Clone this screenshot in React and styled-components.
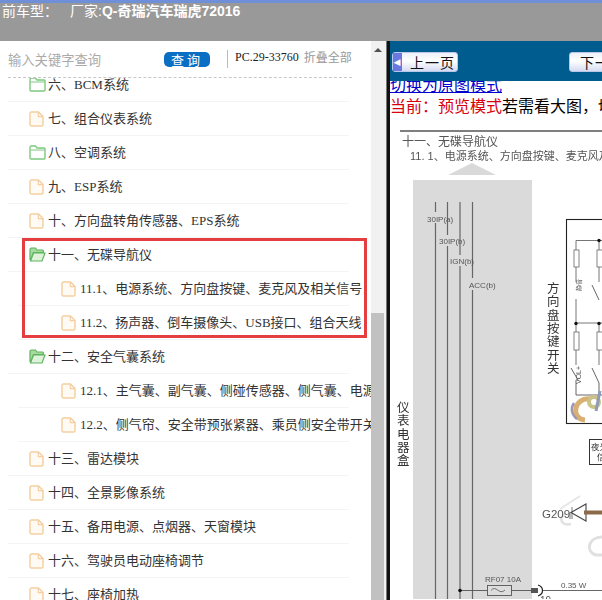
import React from 'react';
import styled, { createGlobalStyle } from 'styled-components';

const cjk = '"Liberation Serif", "Noto Sans CJK SC", serif';
const hei = '"Noto Sans CJK SC", "Liberation Sans", sans-serif';

const Global = createGlobalStyle`
  html, body { margin: 0; padding: 0; background: #fff; overflow: hidden; }
  * { box-sizing: border-box; }
`;

const Page = styled.div`
  width: 602px;
  height: 600px;
  display: flex;
  flex-direction: column;
  overflow: hidden;
`;

const TopBar = styled.div`
  height: 41px;
  flex: none;
  background: #999999;
  border-top: 3px solid #6f8fd8;
  padding: 0 0 0 2px;
  color: #fff;
  font: 14px/15px ${hei};
  white-space: nowrap;
  span { margin-left: 12px; font-family: "Liberation Sans", "Noto Sans CJK SC", sans-serif; }
  b { font-weight: 700; }
`;

const Main = styled.div`
  flex: 1;
  display: flex;
  min-height: 0;
`;

const LeftPane = styled.div`
  width: 371px;
  flex: none;
  display: flex;
  flex-direction: column;
  overflow: hidden;
  background: #fff;
`;

const SearchBar = styled.div`
  height: 37px;
  flex: none;
  margin: 0 19px 0 8px;
  border-bottom: 1px dashed #c8c8c8;
  display: flex;
  align-items: center;
  white-space: nowrap;
`;

const Keyword = styled.div`
  width: 156px;
  color: #aaa;
  font: 13.3px/16px ${hei};
  padding-top: 2px;
`;

const QueryButton = styled.div`
  width: 46px;
  height: 15px;
  border-radius: 5px;
  background: #0a6fc2;
  color: #fff;
  font: 13px/15px ${hei};
  letter-spacing: 3px;
  text-align: center;
`;

const Divider = styled.div`
  width: 1px;
  height: 18px;
  margin: 0 7px 0 17px;
  background: #bbb;
`;

const PartNo = styled.div`
  color: #222;
  font: 12px/14px "Liberation Serif", serif;
  margin-bottom: 4px;
`;

const Collapse = styled.div`
  color: #999;
  font: 12px/14px ${hei};
  margin: 0 0 4px 5px;
`;

const ListClip = styled.div`
  flex: 1;
  min-height: 0;
  overflow: hidden;
  position: relative;
`;

const List = styled.div`
  margin-top: -10px;
`;

const Row = styled.div`
  height: 34px;
  margin-left: ${p => (p.$sub ? '18px' : '8px')};
  width: ${p => (p.$sub ? '331px' : '341px')};
  padding-left: ${p => (p.$sub ? '43px' : '21px')};
  border-bottom: 1px solid #f4f4f4;
  display: flex;
  align-items: center;
  white-space: nowrap;
  color: #333;
  font: 13px/16px ${cjk};
`;

const IconBox = styled.span`
  width: 19px;
  height: 16px;
  flex: none;
  display: inline-flex;
  align-items: center;
`;

const Highlight = styled.div`
  position: absolute;
  left: 22px;
  top: 160px;
  width: 345px;
  height: 100px;
  border: 3px solid #e53e41;
`;

const Scrollbar = styled.div`
  width: 15px;
  flex: none;
  background: #f1f1f1;
  display: flex;
  flex-direction: column;
  justify-content: space-between;
`;

const ArrowUp = styled.div`
  width: 0;
  height: 0;
  margin: 7px 0 0 3px;
  border-left: 4px solid transparent;
  border-right: 4px solid transparent;
  border-bottom: 4px solid #505050;
`;

const Thumb = styled.div`
  width: 13px;
  height: 287px;
  background: #c1c1c1;
`;

const Splitter = styled.div`
  width: 4px;
  flex: none;
  background: #111;
  border-left: 1px solid #777;
`;

const RightPane = styled.div`
  flex: 1;
  min-width: 0;
  overflow: hidden;
  display: flex;
  flex-direction: column;
  background: #fff;
`;

const NavBar = styled.div`
  height: 40px;
  flex: none;
  background: #005b8e;
  padding: 11px 0 0 2px;
  display: flex;
  justify-content: space-between;
`;

const PageButton = styled.div`
  width: ${p => (p.$next ? '60px' : '66px')};
  height: 20px;
  flex: none;
  margin-right: ${p => (p.$next ? '-27px' : '0')};
  border: 1px solid #b9c8e6;
  border-radius: 3px;
  background: linear-gradient(#eef1fa, #ffffff 45%, #d5dcf2);
  color: #111;
  font: 14px/18px ${hei};
  letter-spacing: 1px;
  padding-left: ${p => (p.$next ? '10px' : '17px')};
  position: relative;
  white-space: nowrap;
`;

const BackMark = styled.i`
  position: absolute;
  left: 0;
  top: 0;
  width: 9px;
  height: 18px;
  background: #6a78e0;
  color: #fff;
  font: 700 9px/18px "DejaVu Sans", sans-serif;
  text-align: center;
`;

const ModeText = styled.div`
  flex: none;
  height: 40px;
  margin-top: 0;
  overflow: hidden;
  white-space: nowrap;
  font: 16px/21px ${hei};
  color: #000;
  border-bottom: 0;
  a { display: block; margin-top: -7px; color: #0000cc; text-decoration: underline; }
  em { font-style: normal; color: #d8000c; }
  hr { margin: 6px 0 0; border: 0; height: 1px; background: #999; }
`;

const Drawing = styled.svg`
  flex: none;
  width: 212px;
  height: 478px;
  display: block;
  filter: blur(0.35px);
  text { font-family: "Liberation Sans", "Noto Sans CJK SC", sans-serif; fill: #555; }
`;

function FolderClosed() {
  return (
    <svg width="17" height="15" viewBox="0 0 17 15">
      <path d="M1 13V2.5C1 1.7 1.6 1 2.4 1H6.5L8 3H15C15.6 3 16 3.5 16 4V13C16 13.6 15.6 14 15 14H2C1.4 14 1 13.6 1 13Z" fill="#fff" stroke="#7ec97e" strokeWidth="1.4" />
      <path d="M1.4 5H15.6" stroke="#7ec97e" strokeWidth="1" />
    </svg>
  );
}

function FolderOpen() {
  return (
    <svg width="17" height="15" viewBox="0 0 17 15">
      <path d="M1 13V2.5C1 1.7 1.6 1 2.4 1H6.5L8 3H13.5C14 3 14.4 3.4 14.4 4V5.5H4.5L1.5 13.6" fill="#a6dba0" stroke="#5fb35f" strokeWidth="1.2" />
      <path d="M1.5 14H13L16 6H4.5Z" fill="#dff3db" stroke="#5fb35f" strokeWidth="1.2" />
    </svg>
  );
}

function FileIcon() {
  return (
    <svg width="15" height="16" viewBox="0 0 15 16">
      <path d="M2.6 1H9.5L14 5.5V13.4C14 14.3 13.3 15 12.4 15H2.6C1.7 15 1 14.3 1 13.4V2.6C1 1.7 1.7 1 2.6 1Z" fill="#fffaf3" stroke="#f5cfa3" strokeWidth="1.5" />
      <path d="M9.3 1.2V5.6H13.8" fill="none" stroke="#f5cfa3" strokeWidth="1.2" />
    </svg>
  );
}

const rows = [
  { text: '六、BCM系统', icon: 'closed' },
  { text: '七、组合仪表系统' },
  { text: '八、空调系统', icon: 'closed' },
  { text: '九、ESP系统' },
  { text: '十、方向盘转角传感器、EPS系统' },
  { text: '十一、无碟导航仪', icon: 'open' },
  { text: '11.1、电源系统、方向盘按键、麦克风及相关信号', sub: true },
  { text: '11.2、扬声器、倒车摄像头、USB接口、组合天线', sub: true },
  { text: '十二、安全气囊系统', icon: 'open' },
  { text: '12.1、主气囊、副气囊、侧碰传感器、侧气囊、电源模块', sub: true },
  { text: '12.2、侧气帘、安全带预张紧器、乘员侧安全带开关', sub: true },
  { text: '十三、雷达模块' },
  { text: '十四、全景影像系统' },
  { text: '十五、备用电源、点烟器、天窗模块' },
  { text: '十六、驾驶员电动座椅调节' },
  { text: '十七、座椅加热' },
];

const icons = { closed: FolderClosed, open: FolderOpen };

function Schematic() {
  const wires = [
    [435.5, 203, 213], [435.5, 224, 600],
    [447.5, 203, 236], [447.5, 247, 600],
    [460, 203, 256], [460, 267, 600],
    [472.5, 203, 279], [472.5, 291, 600],
  ];
  return (
    <Drawing viewBox="390 122 212 478">
      <path d="M400 132H602" stroke="#555" strokeWidth="1.4" />
      <text x="402" y="147" fontSize="12">十一、无碟导航仪</text>
      <text x="410" y="161" fontSize="11">11. 1、电源系统、方向盘按键、麦克风及相关信号</text>

      <path d="M448 176L472 164L496 176Z" fill="#d9d9d9" />
      <rect x="413" y="181" width="119" height="419" fill="#dadada" />
      {wires.map(([x, y1, y2]) => (
        <path key={x + '-' + y1} d={`M${x} ${y1}V${y2}`} stroke="#666" strokeWidth="1.2" />
      ))}
      <text x="427" y="223" fontSize="8">30IP(a)</text>
      <text x="439" y="245" fontSize="8">30IP(b)</text>
      <text x="450" y="265" fontSize="8">IGN(b)</text>
      <text x="469" y="289" fontSize="8">ACC(b)</text>

      {'仪表电器盒'.split('').map((c, i) => (
        <text key={c} x="397" y={413 + i * 13.3} fontSize="12.5" style={{ fill: '#333' }}>{c}</text>
      ))}
      {'方向盘按键开关'.split('').map((c, i) => (
        <text key={c} x="547" y={294 + i * 13.3} fontSize="12.5" style={{ fill: '#333' }}>{c}</text>
      ))}

      <rect x="566.5" y="220.5" width="50" height="204" fill="#fff" stroke="#222" strokeWidth="1.1" />
      <path d="M576 241.5H610M576 241.5V251M576 268V283M576 300V324M576 324H610M576 324V333M576 351V366M599 241.5V251M599 268V283M599 324V333M599 351V366" stroke="#666" strokeWidth="0.9" fill="none" />
      <rect x="574" y="251" width="5" height="17" fill="#fff" stroke="#666" strokeWidth="0.8" />
      <rect x="597" y="251" width="6" height="17" fill="#fff" stroke="#666" strokeWidth="0.8" />
      <rect x="574" y="333" width="5" height="18" fill="#fff" stroke="#666" strokeWidth="0.8" />
      <rect x="597" y="333" width="6" height="18" fill="#fff" stroke="#666" strokeWidth="0.8" />
      <path d="M592 286L599 301M592 369L599 384M571 369L578 381M576 381V396M599 384V396M576 396H602" stroke="#555" strokeWidth="0.9" fill="none" />
      <circle cx="599" cy="241.5" r="1.7" fill="#111" />
      <circle cx="576" cy="324.5" r="1.7" fill="#111" />
      <circle cx="599" cy="324.5" r="1.7" fill="#111" />
      <text x="0" y="0" fontSize="7" transform="translate(581 385) rotate(-90)">VOL+</text>
      <text x="0" y="0" fontSize="6" transform="translate(581 292) rotate(-90)">静音</text>

      <path d="M590 400C574 398 570 420 585 421" fill="none" stroke="#d9b071" strokeWidth="5" />
      <path d="M574 404C570 410 572 416 577 420" fill="none" stroke="#9d97b5" strokeWidth="2.5" />
      <circle cx="594" cy="403" r="5" fill="none" stroke="#c9c38a" strokeWidth="4" />
      <path d="M600 392L596 412" stroke="#8e9cb8" strokeWidth="3" />

      <rect x="589.5" y="440.5" width="30" height="25" fill="#fff" stroke="#333" strokeWidth="1" />
      <text x="591" y="451" fontSize="8.5" style={{ fill: '#333' }}>夜光</text>
      <text x="597" y="461" fontSize="8.5" style={{ fill: '#333' }}>信</text>

      <path d="M560 510L580 497" stroke="#e6e6e6" strokeWidth="2" />
      <path d="M571 525C562 527 558 520 565 515" fill="none" stroke="#e2e2e2" strokeWidth="2.5" />
      <path d="M602 538C588 538 585 553 596 556H602" fill="none" stroke="#e0e0e0" strokeWidth="3" />
      <text x="542" y="519" fontSize="11.5">G209</text>
      <path d="M570 513V520M572 508V520" stroke="#555" strokeWidth="0.8" />
      <path d="M571 513.5L586 505V522Z" fill="#fff" stroke="#444" strokeWidth="1.1" />
      <path d="M584 513.5H602" stroke="#8a6a48" strokeWidth="4" />

      <text x="485" y="583" fontSize="8">RF07 10A</text>
      <text x="561" y="589" fontSize="8">0.35 W</text>
      <path d="M460 591.5H531M543 591.5H602" stroke="#555" strokeWidth="0.9" />
      <circle cx="460" cy="591.5" r="1.8" fill="#111" />
      <rect x="487.5" y="586.5" width="24" height="10" fill="#ddd" stroke="#555" strokeWidth="0.9" />
      <path d="M491 591.5C496 585 499 597 505 591" fill="none" stroke="#555" strokeWidth="0.8" />
      <rect x="531" y="589" width="7" height="5" fill="#555" />
      <path d="M538 586C544 588 544 595 538 597" fill="none" stroke="#222" strokeWidth="1.2" />
      <text x="540" y="605" fontSize="10">19</text>
    </Drawing>
  );
}

export default function App() {
  return (
    <Page>
      <Global />
      <TopBar>
        前车型：<span>厂家:<b>Q-奇瑞汽车瑞虎72016</b></span>
      </TopBar>
      <Main>
        <LeftPane>
          <SearchBar>
            <Keyword>输入关键字查询</Keyword>
            <QueryButton>查询</QueryButton>
            <Divider />
            <PartNo>PC.29-33760</PartNo>
            <Collapse>折叠全部</Collapse>
          </SearchBar>
          <ListClip>
            <List>
              {rows.map(row => {
                const Icon = icons[row.icon] || FileIcon;
                return (
                  <Row key={row.text} $sub={row.sub}>
                    <IconBox><Icon /></IconBox>
                    {row.text}
                  </Row>
                );
              })}
            </List>
            <Highlight />
          </ListClip>
        </LeftPane>
        <Scrollbar>
          <ArrowUp />
          <Thumb />
        </Scrollbar>
        <Splitter />
        <RightPane>
          <NavBar>
            <PageButton><BackMark>◀</BackMark>上一页</PageButton>
            <PageButton $next>下一页</PageButton>
          </NavBar>
          <ModeText>
            <a>切换为原图模式</a>
            <div><em>当前：预览模式</em>若需看大图，切换为原图模式</div>
            <hr />
          </ModeText>
          <Schematic />
        </RightPane>
      </Main>
    </Page>
  );
}
